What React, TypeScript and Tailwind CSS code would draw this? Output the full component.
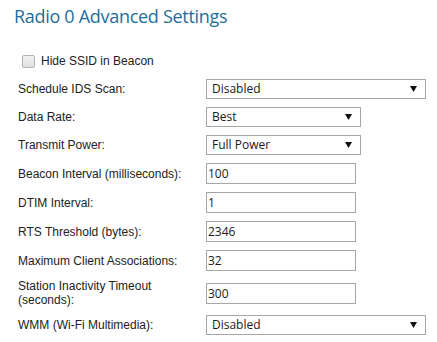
const rows: { label: string; kind: "select" | "input"; value: string; width: string }[] = [
  { label: "Schedule IDS Scan:", kind: "select", value: "Disabled", width: "w-[220px]" },
  { label: "Data Rate:", kind: "select", value: "Best", width: "w-[155px]" },
  { label: "Transmit Power:", kind: "select", value: "Full Power", width: "w-[155px]" },
  { label: "Beacon Interval (milliseconds):", kind: "input", value: "100", width: "w-[150px]" },
  { label: "DTIM Interval:", kind: "input", value: "1", width: "w-[150px]" },
  { label: "RTS Threshold (bytes):", kind: "input", value: "2346", width: "w-[150px]" },
  { label: "Maximum Client Associations:", kind: "input", value: "32", width: "w-[150px]" },
  { label: "Station Inactivity Timeout (seconds):", kind: "input", value: "300", width: "w-[150px]" },
  { label: "WMM (Wi-Fi Multimedia):", kind: "select", value: "Disabled", width: "w-[220px]" },
];

function SelectBox({ value, width }: { value: string; width: string }) {
  return (
    <div
      className={`${width} h-[20px] border border-[#a6a6a6] bg-white flex items-center justify-between pl-[5px] pr-[8px] text-[12px] text-[#1a1a1a]`}
      style={{ fontFamily: '"Open Sans", sans-serif' }}
    >
      <span>{value}</span>
      <svg width="7" height="6" viewBox="0 0 7 6">
        <path d="M0 0 H7 L3.5 6 Z" fill="#111" />
      </svg>
    </div>
  );
}

function TextBox({ value, width }: { value: string; width: string }) {
  return (
    <input
      defaultValue={value}
      className={`${width} h-[21px] border border-[#a6a6a6] bg-white px-[1px] text-[12px] text-[#1a1a1a] outline-none`}
      style={{ fontFamily: '"Open Sans", sans-serif' }}
    />
  );
}

export default function App() {
  return (
    <div className="w-[437px] h-[342px] bg-white overflow-hidden">
      <h1
        className="pl-[14px] pt-[4px] text-[18px] leading-[25px] tracking-[-0.3px] text-[#1f6d9c]"
        style={{ fontFamily: '"Open Sans", sans-serif' }}
      >
        Radio 0 Advanced Settings
      </h1>

      <div className="pl-[18px]" style={{ fontFamily: '"Liberation Sans", Arial, sans-serif' }}>
        <div className="flex items-center mt-[25px] pl-[4px] h-[14px]">
          <div className="w-[13px] h-[13px] rounded-[2px] border border-[#b3b3b3] bg-gradient-to-b from-[#f2f2f2] to-[#e0e0e0]" />
          <span className="ml-[6px] text-[12px] text-[#222]">Hide SSID in Beacon</span>
        </div>

        <div className="flex flex-col gap-[8px] mt-[11px]">
          {rows.map((r) => (
            <div key={r.label} className="flex items-center">
              <div className="w-[178px] mr-[10px] text-[12px] leading-[14px] text-[#222]">{r.label}</div>
              {r.kind === "select" ? (
                <SelectBox value={r.value} width={r.width} />
              ) : (
                <TextBox value={r.value} width={r.width} />
              )}
            </div>
          ))}
        </div>
      </div>
    </div>
  );
}
